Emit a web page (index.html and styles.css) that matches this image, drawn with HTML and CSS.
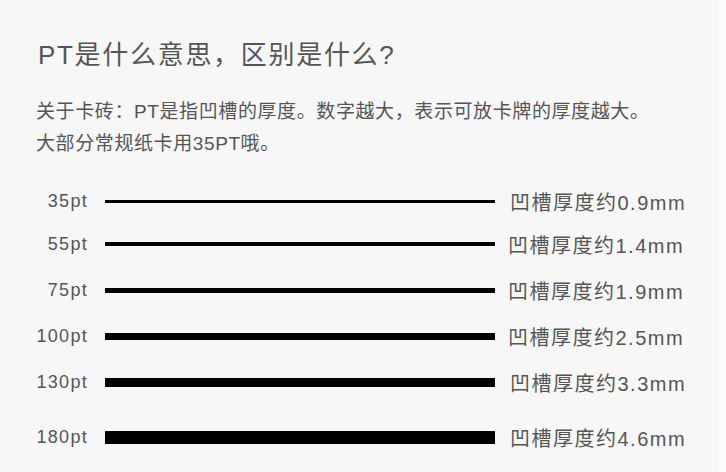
FILE: index.html
```html
<!DOCTYPE html>
<html lang="zh">
<head>
<meta charset="utf-8">
<link rel="stylesheet" href="styles.css">
</head>
<body>
<div class="page">
  <main class="content">
    <h1 class="title">PT是什么意思，区别是什么?</h1>
    <p class="desc">关于卡砖：PT是指凹槽的厚度。数字越大，表示可放卡牌的厚度越大。<br>大部分常规纸卡用35PT哦。</p>
    <div class="chart">
      <div class="row r1"><span class="label">35pt</span><span class="bar"><i class="line" style="height:3px"></i></span><span class="val v1">凹槽厚度约0.9mm</span></div>
      <div class="row r2"><span class="label">55pt</span><span class="bar"><i class="line" style="height:4px"></i></span><span class="val">凹槽厚度约1.4mm</span></div>
      <div class="row r3"><span class="label">75pt</span><span class="bar"><i class="line" style="height:5px"></i></span><span class="val">凹槽厚度约1.9mm</span></div>
      <div class="row r4"><span class="label">100pt</span><span class="bar"><i class="line" style="height:7px"></i></span><span class="val">凹槽厚度约2.5mm</span></div>
      <div class="row r5"><span class="label">130pt</span><span class="bar"><i class="line" style="height:9px"></i></span><span class="val v1">凹槽厚度约3.3mm</span></div>
      <div class="row r6"><span class="label">180pt</span><span class="bar"><i class="line" style="height:13px"></i></span><span class="val v1">凹槽厚度约4.6mm</span></div>
    </div>
  </main>
  <div class="edge"></div>
</div>
</body>
</html>
```
FILE: styles.css
```css
* { box-sizing: border-box; }
html, body { margin: 0; padding: 0; }
body {
  width: 726px;
  height: 472px;
  overflow: hidden;
  background: #f7f7f7;
  font-family: "Liberation Sans", "Noto Sans CJK SC", sans-serif;
  color: #555;
}
.page {
  display: flex;
  height: 472px;
}
.content {
  flex: 1;
  padding: 38px 0 0 36px;
}
.edge {
  width: 7px;
  background: #fcfcfc;
}
.title {
  margin: 0;
  font-size: 26px;
  font-weight: normal;
  line-height: 34px;
  letter-spacing: 1.7px;
  padding-left: 2px;
  color: #555;
}
.desc {
  margin: 24px 0 0 0;
  font-size: 19px;
  line-height: 32px;
  letter-spacing: 0.6px;
  color: #555;
}
.chart {
  display: flex;
  flex-direction: column;
  margin-top: 26px;
}
.row {
  display: grid;
  grid-template-columns: 52px 390px auto;
  column-gap: 17px;
  align-items: center;
  height: 30px;
}
.r2 { margin-top: 13px; }
.r3, .r4, .r5 { margin-top: 16px; }
.r6 { margin-top: 25px; }
.label {
  text-align: right;
  font-size: 18px;
  letter-spacing: 1.3px;
  color: #555;
}
.bar { display: flex; align-items: center; }
.line {
  display: block;
  width: 100%;
  background: #000;
}
.val {
  margin-left: -4px;
  font-size: 20px;
  letter-spacing: 1.5px;
  color: #555;
}
.v1 { margin-left: -2px; }
```
